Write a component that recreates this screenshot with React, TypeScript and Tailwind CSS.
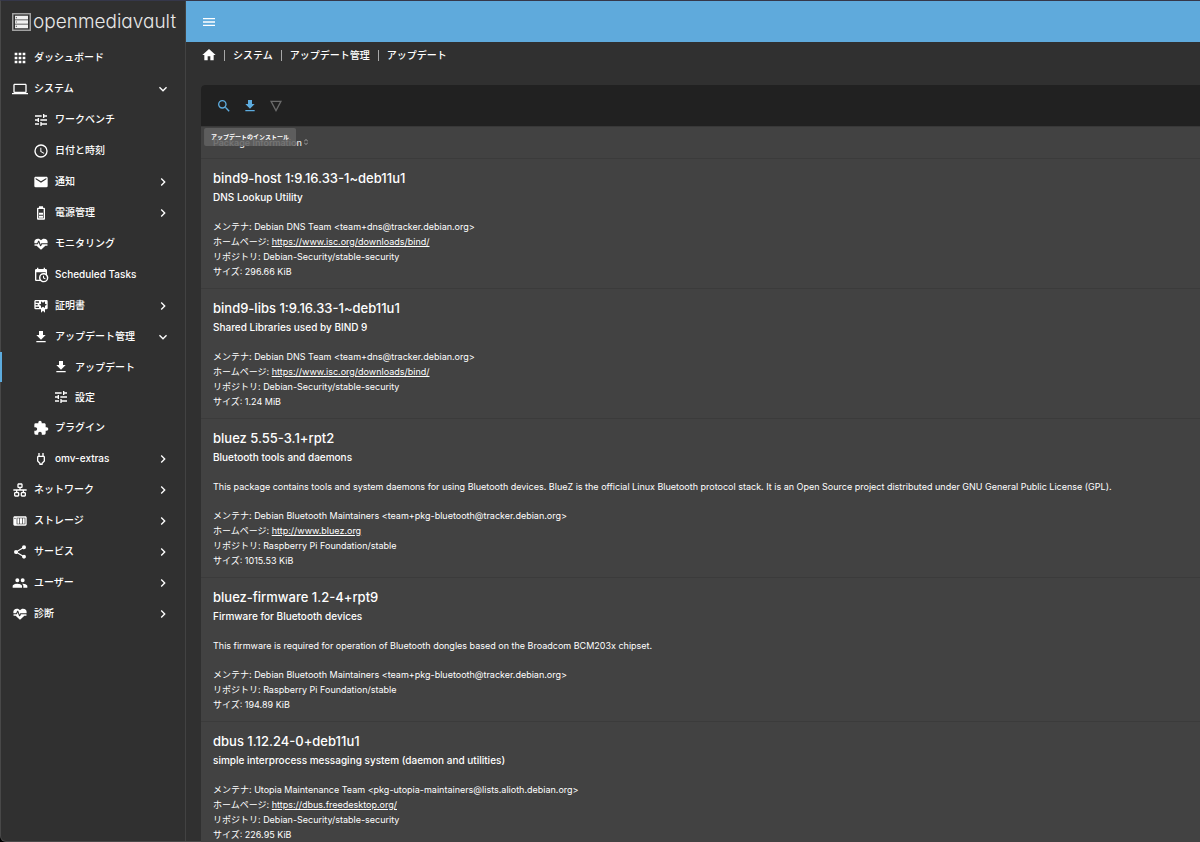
import type { ReactNode } from "react";

const paths = {
  apps: "M16,20H20V16H16M16,14H20V10H16M10,8H14V4H10M16,8H20V4H16M10,14H14V10H10M4,14H8V10H4M4,20H8V16H4M10,20H14V16H10M4,8H8V4H4V8Z",
  laptop: "M4,6H20V16H4M20,18A2,2 0 0,0 22,16V6C22,4.89 21.1,4 20,4H4C2.89,4 2,4.89 2,6V16A2,2 0 0,0 4,18H0V20H24V18H20Z",
  tune: "M3,17V19H9V17H3M3,5V7H13V5H3M13,21V19H21V17H13V15H11V21H13M7,9V11H3V13H7V15H9V9H7M21,13V11H11V13H21M15,9H17V7H21V5H17V3H15V9Z",
  clock: "M12,20A8,8 0 0,0 20,12A8,8 0 0,0 12,4A8,8 0 0,0 4,12A8,8 0 0,0 12,20M12,2A10,10 0 0,1 22,12A10,10 0 0,1 12,22C6.47,22 2,17.5 2,12A10,10 0 0,1 12,2M12.5,7V12.25L17,14.92L16.25,16.15L11,13V7H12.5Z",
  email: "M20,8L12,13L4,8V6L12,11L20,6M20,4H4C2.89,4 2,4.89 2,6V18A2,2 0 0,0 4,20H20A2,2 0 0,0 22,18V6C22,4.89 21.1,4 20,4Z",
  battery: "M16 20H8V6H16M16.67 4H15V2H9V4H7.33C6.6 4 6 4.6 6 5.33V20.67C6 21.4 6.6 22 7.33 22H16.67C17.41 22 18 21.41 18 20.67V5.33C18 4.6 17.4 4 16.67 4M15 16H9V19H15V16M15 11.5H9V14.5H15V11.5Z",
  pulse: "M7.5,4A5.5,5.5 0 0,0 2,9.5C2,10 2.09,10.5 2.22,11H6.3L7.57,7.63C7.87,6.83 9.05,6.75 9.43,7.63L11.5,13L12.09,11.58C12.22,11.25 12.57,11 13,11H21.78C21.91,10.5 22,10 22,9.5A5.5,5.5 0 0,0 16.5,4C14.64,4 13,4.93 12,6.34C11,4.93 9.36,4 7.5,4V4M3,12.5A1,1 0 0,0 2,13.5A1,1 0 0,0 3,14.5H5.44L11,20C12,20.9 12,20.9 13,20L18.56,14.5H21A1,1 0 0,0 22,13.5A1,1 0 0,0 21,12.5H13.4L12.47,14.8C12.07,15.81 10.92,15.67 10.55,14.83L8.5,9.5L7.54,11.83C7.39,12.21 7.05,12.5 6.6,12.5H3Z",
  calendar: "M15,13H16.5V15.82L18.94,17.23L18.19,18.53L15,16.69V13M19,8H5V19H9.67C9.24,18.09 9,17.07 9,16A7,7 0 0,1 16,9C17.07,9 18.09,9.24 19,9.67V8M5,21C3.89,21 3,20.1 3,19V5C3,3.89 3.89,3 5,3H6V1H8V3H16V1H18V3H19A2,2 0 0,1 21,5V11.1C22.24,12.36 23,14.09 23,16A7,7 0 0,1 16,23C14.09,23 12.36,22.24 11.1,21H5M16,11.15A4.85,4.85 0 0,0 11.15,16C11.15,18.68 13.32,20.85 16,20.85A4.85,4.85 0 0,0 20.85,16C20.85,13.32 18.68,11.15 16,11.15Z",
  certificate: "M4,3C2.89,3 2,3.89 2,5V15A2,2 0 0,0 4,17H12V22L15,19L18,22V17H20A2,2 0 0,0 22,15V8L22,6V5A2,2 0 0,0 20,3H16V3H4M12,5L15,7L18,5V8.5L21,10L18,11.5V15L15,13L12,15V11.5L9,10L12,8.5V5M4,5H9V7H4V5M4,9H7V11H4V9M4,13H9V15H4V13Z",
  download: "M5,20H19V18H5M19,9H15V3H9V9H5L12,16L19,9Z",
  puzzle: "M20.5,11H19V7C19,5.89 18.1,5 17,5H13V3.5A2.5,2.5 0 0,0 10.5,1A2.5,2.5 0 0,0 8,3.5V5H4A2,2 0 0,0 2,7V10.8H3.5C5,10.8 6.2,12 6.2,13.5C6.2,15 5,16.2 3.5,16.2H2V20A2,2 0 0,0 4,22H7.8V20.5C7.8,19 9,17.8 10.5,17.8C12,17.8 13.2,19 13.2,20.5V22H17A2,2 0 0,0 19,20V16H20.5A2.5,2.5 0 0,0 23,13.5A2.5,2.5 0 0,0 20.5,11Z",
  plug: "M16 9V14.67L13.09 17.59L12.5 18.17V19H11.5V18.17L10.91 17.59L8 14.67V9H16M16 3H14V7H10V3H8V7H7.99C6.89 7 6 7.89 6 8.98V15.5L9.5 19V21H14.5V19L18 15.5V9C18 7.9 17.1 7 16 7V3Z",
  lan: "M10,2C8.89,2 8,2.89 8,4V7C8,8.11 8.89,9 10,9H11V11H2V13H6V15H5C3.89,15 3,15.89 3,17V20C3,21.11 3.89,22 5,22H9C10.11,22 11,21.11 11,20V17C11,15.89 10.11,15 9,15H8V13H16V15H15C13.89,15 13,15.89 13,17V20C13,21.11 13.89,22 15,22H19C20.11,22 21,21.11 21,20V17C21,15.89 20.11,15 19,15H18V13H22V11H13V9H14C15.11,9 16,8.11 16,7V4C16,2.89 15.11,2 14,2H10M10,4H14V7H10V4M5,17H9V20H5V17M15,17H19V20H15V17Z",
  nas: "M4,5C2.89,5 2,5.89 2,7V17C2,18.11 2.89,19 4,19H20C21.11,19 22,18.11 22,17V7C22,5.89 21.11,5 20,5H4M4.5,7A1,1 0 0,1 5.5,8A1,1 0 0,1 4.5,9A1,1 0 0,1 3.5,8A1,1 0 0,1 4.5,7M7,7H20V17H7V7M8,8V16H11V8H8M12,8V16H15V8H12M16,8V16H19V8H16Z",
  share: "M18,16.08C17.24,16.08 16.56,16.38 16.04,16.85L8.91,12.7C8.96,12.47 9,12.24 9,12C9,11.76 8.96,11.53 8.91,11.3L15.96,7.19C16.5,7.69 17.21,8 18,8A3,3 0 0,0 21,5A3,3 0 0,0 18,2A3,3 0 0,0 15,5C15,5.24 15.04,5.47 15.09,5.7L8.04,9.81C7.5,9.31 6.79,9 6,9A3,3 0 0,0 3,12A3,3 0 0,0 6,15C6.79,15 7.5,14.69 8.04,14.19L15.16,18.34C15.11,18.55 15.08,18.77 15.08,19C15.08,20.61 16.39,21.91 18,21.91C19.61,21.91 20.92,20.61 20.92,19A2.92,2.92 0 0,0 18,16.08Z",
  users: "M16,13C15.71,13 15.38,13 15.03,13.05C16.19,13.89 17,15 17,16.5V19H23V16.5C23,14.17 18.33,13 16,13M8,13C5.67,13 1,14.17 1,16.5V19H15V16.5C15,14.17 10.33,13 8,13M8,11A3,3 0 0,0 11,8A3,3 0 0,0 8,5A3,3 0 0,0 5,8A3,3 0 0,0 8,11M16,11A3,3 0 0,0 19,8A3,3 0 0,0 16,5A3,3 0 0,0 13,8A3,3 0 0,0 16,11Z",
  home: "M10,20V14H14V20H19V12H22L12,3L2,12H5V20H10Z",
  menu: "M3,6H21V8H3V6M3,11H21V13H3V11M3,16H21V18H3V16Z",
  magnify: "M9.5,3A6.5,6.5 0 0,1 16,9.5C16,11.11 15.41,12.59 14.44,13.73L14.71,14H15.5L20.5,19L19,20.5L14,15.5V14.71L13.73,14.44C12.59,15.41 11.11,16 9.5,16A6.5,6.5 0 0,1 3,9.5A6.5,6.5 0 0,1 9.5,3M9.5,5C7,5 5,7 5,9.5C5,12 7,14 9.5,14C12,14 14,12 14,9.5C14,7 12,5 9.5,5Z",
  right: "M8.59,16.58L13.17,12L8.59,7.41L10,6L16,12L10,18L8.59,16.58Z",
  down: "M7.41,8.58L12,13.17L16.59,8.58L18,10L12,16L6,10L7.41,8.58Z",
  sort: "M12,6L7.41,10.59L6,9.17L12,3.17L18,9.17L16.59,10.59L12,6M12,18L16.59,13.41L18,14.83L12,20.83L6,14.83L7.41,13.41L12,18Z",
  filter: "M3,4H21L12,21L3,4M6.3,6L12,16.8L17.7,6H6.3Z",
};

type IconName = keyof typeof paths;

function Icon({ name, className = "size-4" }: { name: IconName; className?: string }) {
  return (
    <svg viewBox="0 0 24 24" fill="currentColor" fillRule="evenodd" aria-hidden="true" className={`shrink-0 ${className}`}>
      <path d={paths[name]} />
    </svg>
  );
}

type NavItem = { icon: IconName; label: string; level: 0 | 1 | 2; arrow?: "right" | "down"; active?: boolean };

const nav: NavItem[] = [
  { icon: "apps", label: "ダッシュボード", level: 0 },
  { icon: "laptop", label: "システム", level: 0, arrow: "down" },
  { icon: "tune", label: "ワークベンチ", level: 1 },
  { icon: "clock", label: "日付と時刻", level: 1 },
  { icon: "email", label: "通知", level: 1, arrow: "right" },
  { icon: "battery", label: "電源管理", level: 1, arrow: "right" },
  { icon: "pulse", label: "モニタリング", level: 1 },
  { icon: "calendar", label: "Scheduled Tasks", level: 1 },
  { icon: "certificate", label: "証明書", level: 1, arrow: "right" },
  { icon: "download", label: "アップデート管理", level: 1, arrow: "down" },
  { icon: "download", label: "アップデート", level: 2, active: true },
  { icon: "tune", label: "設定", level: 2 },
  { icon: "puzzle", label: "プラグイン", level: 1 },
  { icon: "plug", label: "omv-extras", level: 1, arrow: "right" },
  { icon: "lan", label: "ネットワーク", level: 0, arrow: "right" },
  { icon: "nas", label: "ストレージ", level: 0, arrow: "right" },
  { icon: "share", label: "サービス", level: 0, arrow: "right" },
  { icon: "users", label: "ユーザー", level: 0, arrow: "right" },
  { icon: "pulse", label: "診断", level: 0, arrow: "right" },
];

const levelStyle = ["h-[31px] pl-2.5", "h-[31px] pl-[31px]", "h-[30px] pl-[51px]"];

function NavRow({ item }: { item: NavItem }) {
  return (
    <li>
      <a
        href="#"
        aria-current={item.active ? "page" : undefined}
        className={`flex items-center gap-1.5 border-l-2 pr-3.5 ${item.active ? "border-[#5dacdf]" : "border-transparent"} ${levelStyle[item.level]}`}
      >
        <Icon name={item.icon} />
        <span className="grow whitespace-nowrap">{item.label}</span>
        {item.arrow && <Icon name={item.arrow} />}
      </a>
    </li>
  );
}

type Package = {
  title: string;
  summary: string;
  description?: string;
  maintainer: string;
  homepage?: string;
  repository: string;
  size: string;
};

const packages: Package[] = [
  {
    title: "bind9-host 1:9.16.33-1~deb11u1",
    summary: "DNS Lookup Utility",
    maintainer: "Debian DNS Team <team+dns@tracker.debian.org>",
    homepage: "https://www.isc.org/downloads/bind/",
    repository: "Debian-Security/stable-security",
    size: "296.66 KiB",
  },
  {
    title: "bind9-libs 1:9.16.33-1~deb11u1",
    summary: "Shared Libraries used by BIND 9",
    maintainer: "Debian DNS Team <team+dns@tracker.debian.org>",
    homepage: "https://www.isc.org/downloads/bind/",
    repository: "Debian-Security/stable-security",
    size: "1.24 MiB",
  },
  {
    title: "bluez 5.55-3.1+rpt2",
    summary: "Bluetooth tools and daemons",
    description:
      "This package contains tools and system daemons for using Bluetooth devices. BlueZ is the official Linux Bluetooth protocol stack. It is an Open Source project distributed under GNU General Public License (GPL).",
    maintainer: "Debian Bluetooth Maintainers <team+pkg-bluetooth@tracker.debian.org>",
    homepage: "http://www.bluez.org",
    repository: "Raspberry Pi Foundation/stable",
    size: "1015.53 KiB",
  },
  {
    title: "bluez-firmware 1.2-4+rpt9",
    summary: "Firmware for Bluetooth devices",
    description: "This firmware is required for operation of Bluetooth dongles based on the Broadcom BCM203x chipset.",
    maintainer: "Debian Bluetooth Maintainers <team+pkg-bluetooth@tracker.debian.org>",
    repository: "Raspberry Pi Foundation/stable",
    size: "194.89 KiB",
  },
  {
    title: "dbus 1.12.24-0+deb11u1",
    summary: "simple interprocess messaging system (daemon and utilities)",
    maintainer: "Utopia Maintenance Team <pkg-utopia-maintainers@lists.alioth.debian.org>",
    homepage: "https://dbus.freedesktop.org/",
    repository: "Debian-Security/stable-security",
    size: "226.95 KiB",
  },
];

function PackageRow({ pkg }: { pkg: Package }) {
  return (
    <tr className="border-b border-[#3b3b3b]">
      <td className="px-3 pt-[9px] pb-[9px]">
        <h2 className="text-[13px] leading-5 font-medium">{pkg.title}</h2>
        <p className="text-[10px] leading-[18px] font-medium">{pkg.summary}</p>
        <div className="mt-[13px] text-[9px] leading-[15px]">
          {pkg.description && <p className="mb-3.5">{pkg.description}</p>}
          <p>メンテナ: {pkg.maintainer}</p>
          {pkg.homepage && (
            <p>
              ホームページ:{" "}
              <a href={pkg.homepage} className="underline">
                {pkg.homepage}
              </a>
            </p>
          )}
          <p>リポジトリ: {pkg.repository}</p>
          <p>サイズ: {pkg.size}</p>
        </div>
      </td>
    </tr>
  );
}

function Crumb({ children }: { children: ReactNode }) {
  return (
    <li className="flex items-center gap-2">
      <span aria-hidden="true" className="h-[11px] w-px bg-[#a8a8a8]" />
      <a href="#">{children}</a>
    </li>
  );
}

function Logo() {
  return (
    <a href="#" className="flex h-[41px] items-center gap-0.5 pl-[11px] text-[#e8e8e8]">
      <svg viewBox="0 0 19 18" aria-hidden="true" className="h-[18px] w-[19px] shrink-0">
        <rect x="0.75" y="0.75" width="17.5" height="16.5" fill="none" stroke="#a8a8a8" strokeWidth="1.4" />
        <path d="M3 2.8h13v3.6H3zM3 7.2h13v3.6H3zM3 11.6h13v3.6H3z" fill="#f0f0f0" />
        <path d="M3.8 4h1.2v1.2H3.8zM3.8 8.4h1.2v1.2H3.8zM3.8 12.8h1.2v1.2H3.8z" fill="#707070" />
      </svg>
      <span className="text-[19px] leading-6 font-light [font-feature-settings:'cv11']">openmediavault</span>
    </a>
  );
}

export default function App() {
  return (
    <div className="h-screen overflow-hidden bg-black font-['Inter','Noto_Sans_CJK_JP',sans-serif] text-white">
      <div className="flex h-full rounded-bl-md border-t border-b border-l border-t-[#35374a] border-b-[#4a4a4a] border-l-[#484848] bg-[#303030]">
        <aside className="w-[185px] shrink-0 border-r border-[#424242]">
          <Logo />
          <nav aria-label="メイン" className="-ml-px text-[10px] font-medium">
            <ul>
              {nav.map((item, i) => (
                <NavRow key={i} item={item} />
              ))}
            </ul>
          </nav>
        </aside>
        <div className="flex min-w-0 grow flex-col">
          <header className="flex h-[41px] shrink-0 items-center bg-[#5faadc] px-[15px]">
            <button type="button" aria-label="メニュー">
              <Icon name="menu" />
            </button>
          </header>
          <nav aria-label="パンくず" className="px-[15px] pt-[5px] text-[10px] font-medium">
            <ol className="flex h-4 items-center gap-2">
              <li className="-mr-px">
                <a href="#" aria-label="ホーム">
                  <Icon name="home" />
                </a>
              </li>
              <Crumb>システム</Crumb>
              <Crumb>アップデート管理</Crumb>
              <Crumb>アップデート</Crumb>
            </ol>
          </nav>
          <main className="mt-[22px] ml-[15px] rounded-tl bg-[#424242]">
            <div className="flex h-[42px] items-center gap-2.5 rounded-tl border-b border-[#383838] bg-[#212121] px-[15px] text-[#5dacdf]">
              <button type="button" aria-label="検索">
                <Icon name="magnify" />
              </button>
              <button type="button" aria-describedby="install-tip" aria-label="インストール" className="relative">
                <Icon name="download" />
                <span
                  id="install-tip"
                  role="tooltip"
                  className="absolute top-full left-1/2 z-10 mt-3.5 -translate-x-1/2 rounded-xs bg-[#616161]/85 px-[7px] text-[6px] leading-[18px] font-bold whitespace-nowrap text-white"
                >
                  アップデートのインストール
                </span>
              </button>
              <button type="button" aria-label="フィルター" className="text-[#6b6b6b]">
                <Icon name="filter" />
              </button>
            </div>
            <table className="w-full border-collapse">
              <thead>
                <tr className="border-b border-[#3b3b3b]">
                  <th scope="col" className="h-[31px] px-3 text-left text-[9px] font-medium text-[#e6e6e6]">
                    <span className="flex items-center">
                      Package Information
                      <Icon name="sort" className="size-2 text-[#a0a0a0]" />
                    </span>
                  </th>
                </tr>
              </thead>
              <tbody>
                {packages.map((pkg) => (
                  <PackageRow key={pkg.title} pkg={pkg} />
                ))}
              </tbody>
            </table>
          </main>
        </div>
      </div>
    </div>
  );
}
